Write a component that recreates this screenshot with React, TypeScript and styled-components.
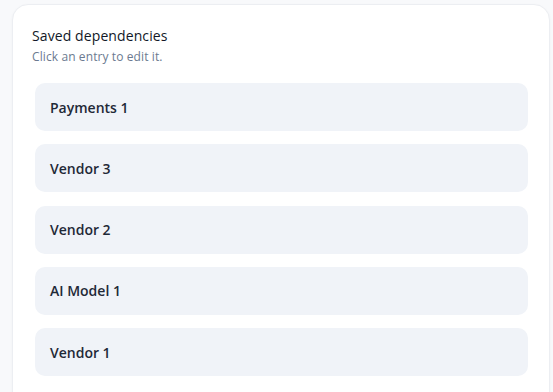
import React from 'react';
import styled, { createGlobalStyle } from 'styled-components';

const GlobalStyle = createGlobalStyle`
  html, body {
    margin: 0;
    padding: 0;
    background: #f8f9fb;
    font-family: "Open Sans", "Noto Sans", Arial, sans-serif;
  }
`;

const Page = styled.div`
  padding: 4px 3px 0 12px;
  height: 392px;
  box-sizing: border-box;
  overflow: hidden;
`;

const Card = styled.section`
  background: #ffffff;
  border: 1px solid #eceef2;
  border-radius: 16px;
  padding: 20px 21px 24px 19px;
  box-shadow: 0 1px 3px rgba(15, 23, 42, 0.04);
  min-height: 420px;
  box-sizing: border-box;
`;

const Title = styled.h2`
  margin: 0;
  font-size: 14px;
  line-height: 22px;
  font-weight: 500;
  letter-spacing: 0.1px;
  color: #111827;
`;

const Subtitle = styled.p`
  margin: 2px 0 0 0;
  font-size: 12px;
  line-height: 16px;
  letter-spacing: 0.1px;
  color: #6b7a90;
`;

const List = styled.ul`
  list-style: none;
  margin: 18px 0 0 0;
  padding: 0 0 0 3px;
  display: flex;
  flex-direction: column;
  gap: 13.25px;
`;

const Item = styled.li`
  height: 48px;
  display: flex;
  align-items: center;
  padding: 0 15px;
  border-radius: 10px;
  background: #f0f3f8;
  font-size: 14px;
  font-weight: 600;
  color: #1f2937;
  cursor: pointer;
`;

const entries = ['Payments 1', 'Vendor 3', 'Vendor 2', 'AI Model 1', 'Vendor 1'];

export default function App() {
  return (
    <>
      <GlobalStyle />
      <Page>
        <Card>
          <Title>Saved dependencies</Title>
          <Subtitle>Click an entry to edit it.</Subtitle>
          <List>
            {entries.map((e) => (
              <Item key={e}>{e}</Item>
            ))}
          </List>
        </Card>
      </Page>
    </>
  );
}
